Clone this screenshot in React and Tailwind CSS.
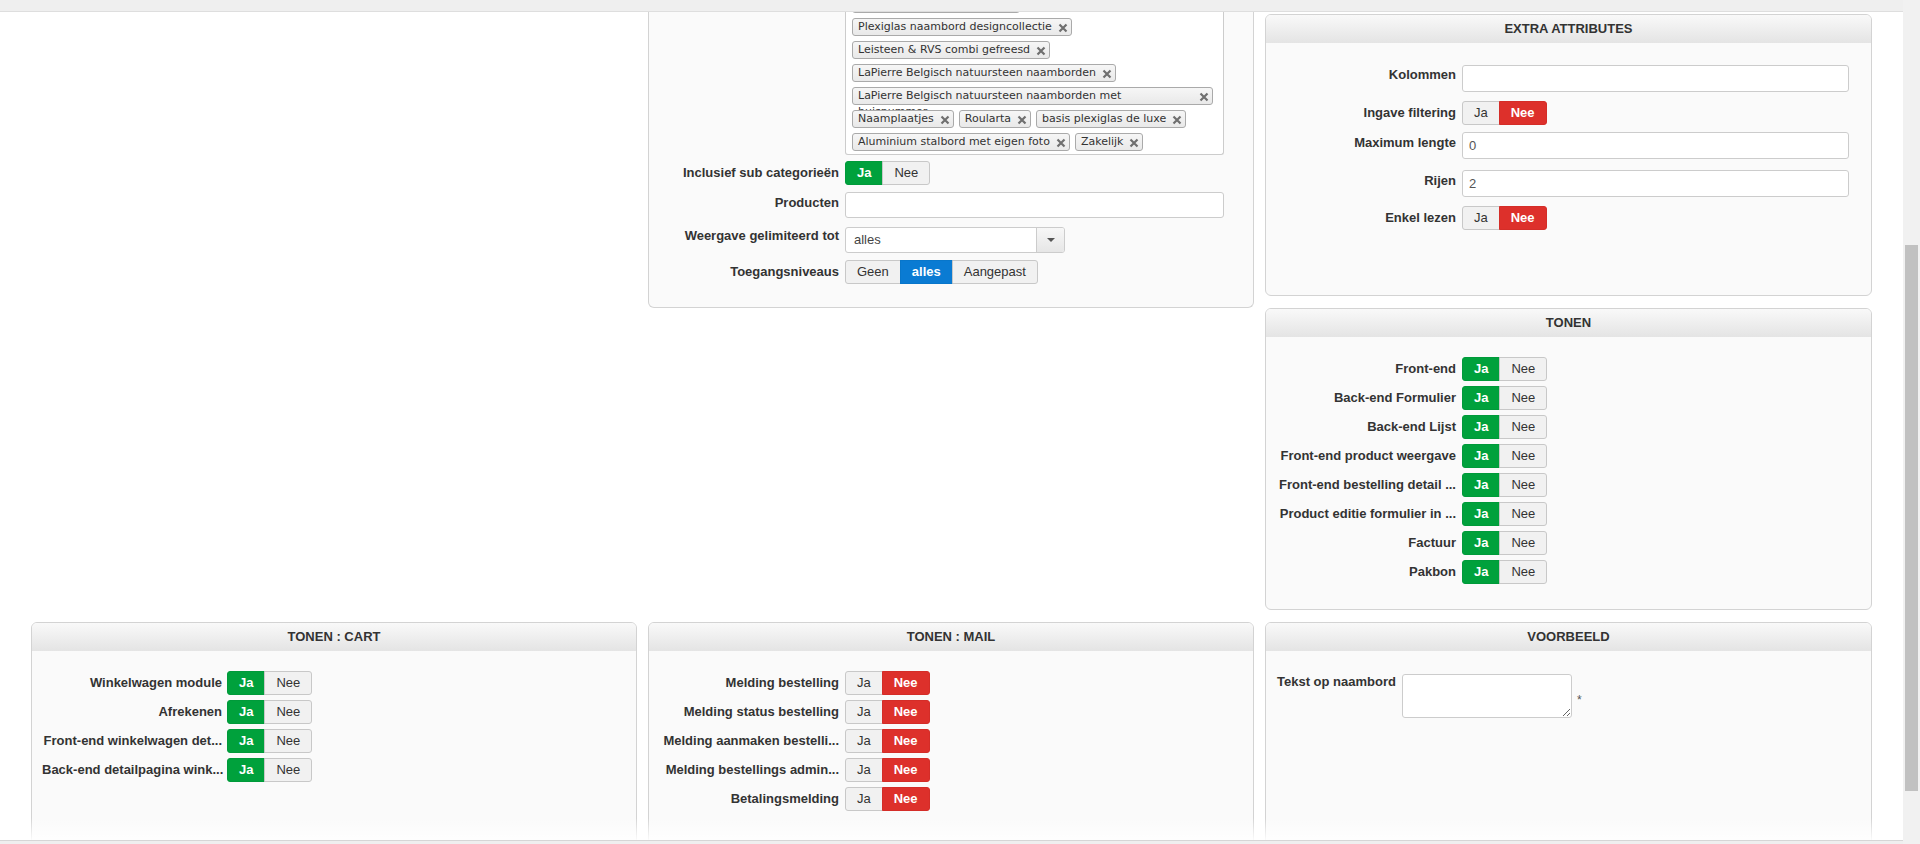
import clsx from "clsx";

const ACTIVE = {
  green: "border-[#009a3a] bg-[#00a13c] font-bold text-white",
  red: "border-[#d42d28] bg-[#dd302b] font-bold text-white",
  blue: "border-[#0876ca] bg-[#0a7bd3] font-bold text-white",
};

const categories = [
  "Plexiglas naambord designcollectie",
  "Leisteen & RVS combi gefreesd",
  "LaPierre Belgisch natuursteen naamborden",
  "LaPierre Belgisch natuursteen naamborden met huisnummer",
  "Naamplaatjes",
  "Roularta",
  "basis plexiglas de luxe",
  "Aluminium stalbord met eigen foto",
  "Zakelijk",
];

const tonen = [
  "Front-end",
  "Back-end Formulier",
  "Back-end Lijst",
  "Front-end product weergave",
  "Front-end bestelling detail ...",
  "Product editie formulier in ...",
  "Factuur",
  "Pakbon",
];

const cart = [
  "Winkelwagen module",
  "Afrekenen",
  "Front-end winkelwagen det...",
  "Back-end detailpagina wink...",
];

const mail = [
  "Melding bestelling",
  "Melding status bestelling",
  "Melding aanmaken bestelli...",
  "Melding bestellings admin...",
  "Betalingsmelding",
];

function Toggle({ options = ["Ja", "Nee"], value, tone }) {
  return (
    <div className="flex h-[24px] shrink-0">
      {options.map((opt, i) => (
        <span
          key={opt}
          className={clsx(
            "flex items-center justify-center border px-[11px] text-[13px] leading-[16px]",
            i === 0 && "rounded-l-[3px]",
            i === options.length - 1 && "rounded-r-[3px]",
            i > 0 && "-ml-px",
            opt === value ? ACTIVE[tone] : "border-[#c8c8c8] bg-[#f1f1f1] text-[#333]"
          )}
        >
          {opt}
        </span>
      ))}
    </div>
  );
}

function TextInput({ value = "", className }) {
  return (
    <input
      readOnly
      defaultValue={value}
      className={clsx(
        "rounded-[3px] border border-[#ccc] bg-white px-[6px] text-[13px] text-[#555] outline-none",
        className
      )}
    />
  );
}

function Field({ label, pad = "pt-[4px]", gap = "gap-[6px]", className, children }) {
  return (
    <div className={clsx("flex items-start", gap, className)}>
      <div
        className={clsx(
          "w-[180px] shrink-0 whitespace-nowrap text-right text-[13px] font-bold leading-[16px] text-[#333]",
          pad
        )}
      >
        {label}
      </div>
      {children}
    </div>
  );
}

function Panel({ title, className, bodyClass, children }) {
  return (
    <div
      className={clsx(
        "flex flex-col overflow-hidden rounded-[6px] border border-[#d3d3d3] bg-[#fafafa]",
        className
      )}
    >
      <div className="flex h-[28px] shrink-0 items-center justify-center bg-linear-to-b from-[#f9f9f9] to-[#e4e4e4] text-[13px] font-bold uppercase text-[#333]">
        {title}
      </div>
      <div className={bodyClass}>{children}</div>
    </div>
  );
}

function Cross() {
  return (
    <svg width="10" height="10" viewBox="0 0 10 10" className="absolute right-[3px] top-[4px]">
      <path d="M1.5 1.5 L8.5 8.5 M8.5 1.5 L1.5 8.5" stroke="#6f6f6f" strokeWidth="2.2" />
    </svg>
  );
}

function Chip({ text, className }) {
  return (
    <div
      className={clsx(
        "relative h-[18px] shrink-0 rounded-[3px] border border-[#aaa] bg-linear-to-b from-[#f6f6f6] to-[#e9e9e9] pl-[5px] pr-[19px] text-[11px] leading-[16px] text-[#333]",
        className
      )}
    >
      {text && <span>{text}</span>}
      <Cross />
    </div>
  );
}

function ToggleList({ items, value, tone, gap }) {
  return (
    <div className="flex flex-col gap-[5px]">
      {items.map((label) => (
        <Field key={label} label={label} gap={gap}>
          <Toggle value={value} tone={tone} />
        </Field>
      ))}
    </div>
  );
}

export default function App() {
  return (
    <div className="flex h-[844px] w-full overflow-hidden bg-white font-['Liberation_Sans',Arial,sans-serif]">
      <div className="flex min-w-0 flex-1 flex-col">
        {/* fixed toolbar strip */}
        <div className="h-[12px] shrink-0 border-b border-[#dedede] bg-[#efefef]" />

        <div className="relative min-h-0 flex-1 overflow-hidden">
          <div className="grid grid-cols-[606px_606px_607px] gap-x-[11px] pl-[31px]">
            <div />

            {/* categorieën / producten block, scrolled past its header */}
            <div className="self-start rounded-b-[6px] border border-t-0 border-[#d3d3d3] bg-[#fafafa] pb-[23px] pl-[10px]">
              <Field label="">
                <div className="w-[379px] rounded-b-[3px] border border-t-0 border-[#ccc] bg-white">
                  <div className="-mt-[17px] flex flex-wrap gap-[5px] pb-[3px] pl-[6px] font-['DejaVu_Sans',Verdana,sans-serif]">
                    {/* chip scrolled out of view above */}
                    <Chip className="w-[168px]" />
                    {categories.map((c) => (
                      <Chip
                        key={c}
                        text={c}
                        className={c.endsWith("huisnummer") ? "w-[361px]" : "whitespace-nowrap"}
                      />
                    ))}
                  </div>
                </div>
              </Field>

              <Field label="Inclusief sub categorieën" className="mt-[6px]">
                <Toggle value="Ja" tone="green" />
              </Field>

              <Field label="Producten" pad="pt-[3px]" className="mt-[7px]">
                <TextInput className="h-[26px] w-[379px]" />
              </Field>

              <Field label="Weergave gelimiteerd tot" pad="pt-[1px]" className="mt-[9px]">
                <div className="flex h-[26px] w-[220px] overflow-hidden rounded-[3px] border border-[#ccc] bg-white">
                  <div className="flex flex-1 items-center pl-[8px] text-[13px] text-[#444]">alles</div>
                  <div className="flex w-[28px] items-center justify-center border-l border-[#ccc] bg-linear-to-b from-[#f7f7f7] to-[#e6e6e6]">
                    <span className="border-x-[4px] border-t-[4px] border-x-transparent border-t-[#555]" />
                  </div>
                </div>
              </Field>

              <Field label="Toegangsniveaus" className="mt-[7px]">
                <Toggle options={["Geen", "alles", "Aangepast"]} value="alles" tone="blue" />
              </Field>
            </div>

            <div className="flex flex-col pt-[2px]">
              <Panel title="Extra attributes" className="h-[282px]" bodyClass="pl-[10px] pt-[22px]">
                <Field label="Kolommen" pad="pt-[2px]">
                  <TextInput className="h-[27px] w-[387px]" />
                </Field>
                <Field label="Ingave filtering" className="mt-[9px]">
                  <Toggle value="Nee" tone="red" />
                </Field>
                <Field label="Maximum lengte" pad="pt-[3px]" className="mt-[7px]">
                  <TextInput value="0" className="h-[27px] w-[387px]" />
                </Field>
                <Field label="Rijen" pad="pt-[3px]" className="mt-[11px]">
                  <TextInput value="2" className="h-[27px] w-[387px]" />
                </Field>
                <Field label="Enkel lezen" className="mt-[9px]">
                  <Toggle value="Nee" tone="red" />
                </Field>
              </Panel>

              <Panel title="Tonen" className="mt-[12px] h-[302px]" bodyClass="pl-[10px] pt-[20px]">
                <ToggleList items={tonen} value="Ja" tone="green" />
              </Panel>
            </div>
          </div>

          <div className="mt-[12px] grid grid-cols-[606px_606px_607px] gap-x-[11px] pl-[31px]">
            <Panel title="Tonen : cart" className="h-[260px]" bodyClass="pl-[10px] pt-[20px]">
              <ToggleList items={cart} value="Ja" tone="green" gap="gap-[5px]" />
            </Panel>

            <Panel title="Tonen : mail" className="h-[260px]" bodyClass="pl-[10px] pt-[20px]">
              <ToggleList items={mail} value="Nee" tone="red" />
            </Panel>

            <Panel title="Voorbeeld" className="h-[260px]" bodyClass="flex items-start pl-[11px] pt-[23px]">
              <div className="text-[13px] font-bold leading-[16px] text-[#333]">Tekst op naambord</div>
              <textarea
                readOnly
                className="ml-[6px] h-[44px] w-[170px] rounded-[3px] border border-[#ccc] bg-white outline-none"
              />
              <span className="ml-[5px] mt-[18px] text-[12px] leading-[16px] text-[#555]">*</span>
            </Panel>
          </div>

          {/* fade above the footer strip */}
          <div className="pointer-events-none absolute inset-x-0 bottom-0 h-[22px] bg-linear-to-b from-white/0 to-white/90" />
        </div>

        <div className="h-[4px] shrink-0 border-t border-[#d6d6d6] bg-[#efefef]" />
      </div>

      {/* page scrollbar */}
      <div className="w-[17px] shrink-0 bg-[#f1f1f1] px-[2px]">
        <div className="mt-[245px] h-[546px] bg-[#c1c1c1]" />
      </div>
    </div>
  );
}
